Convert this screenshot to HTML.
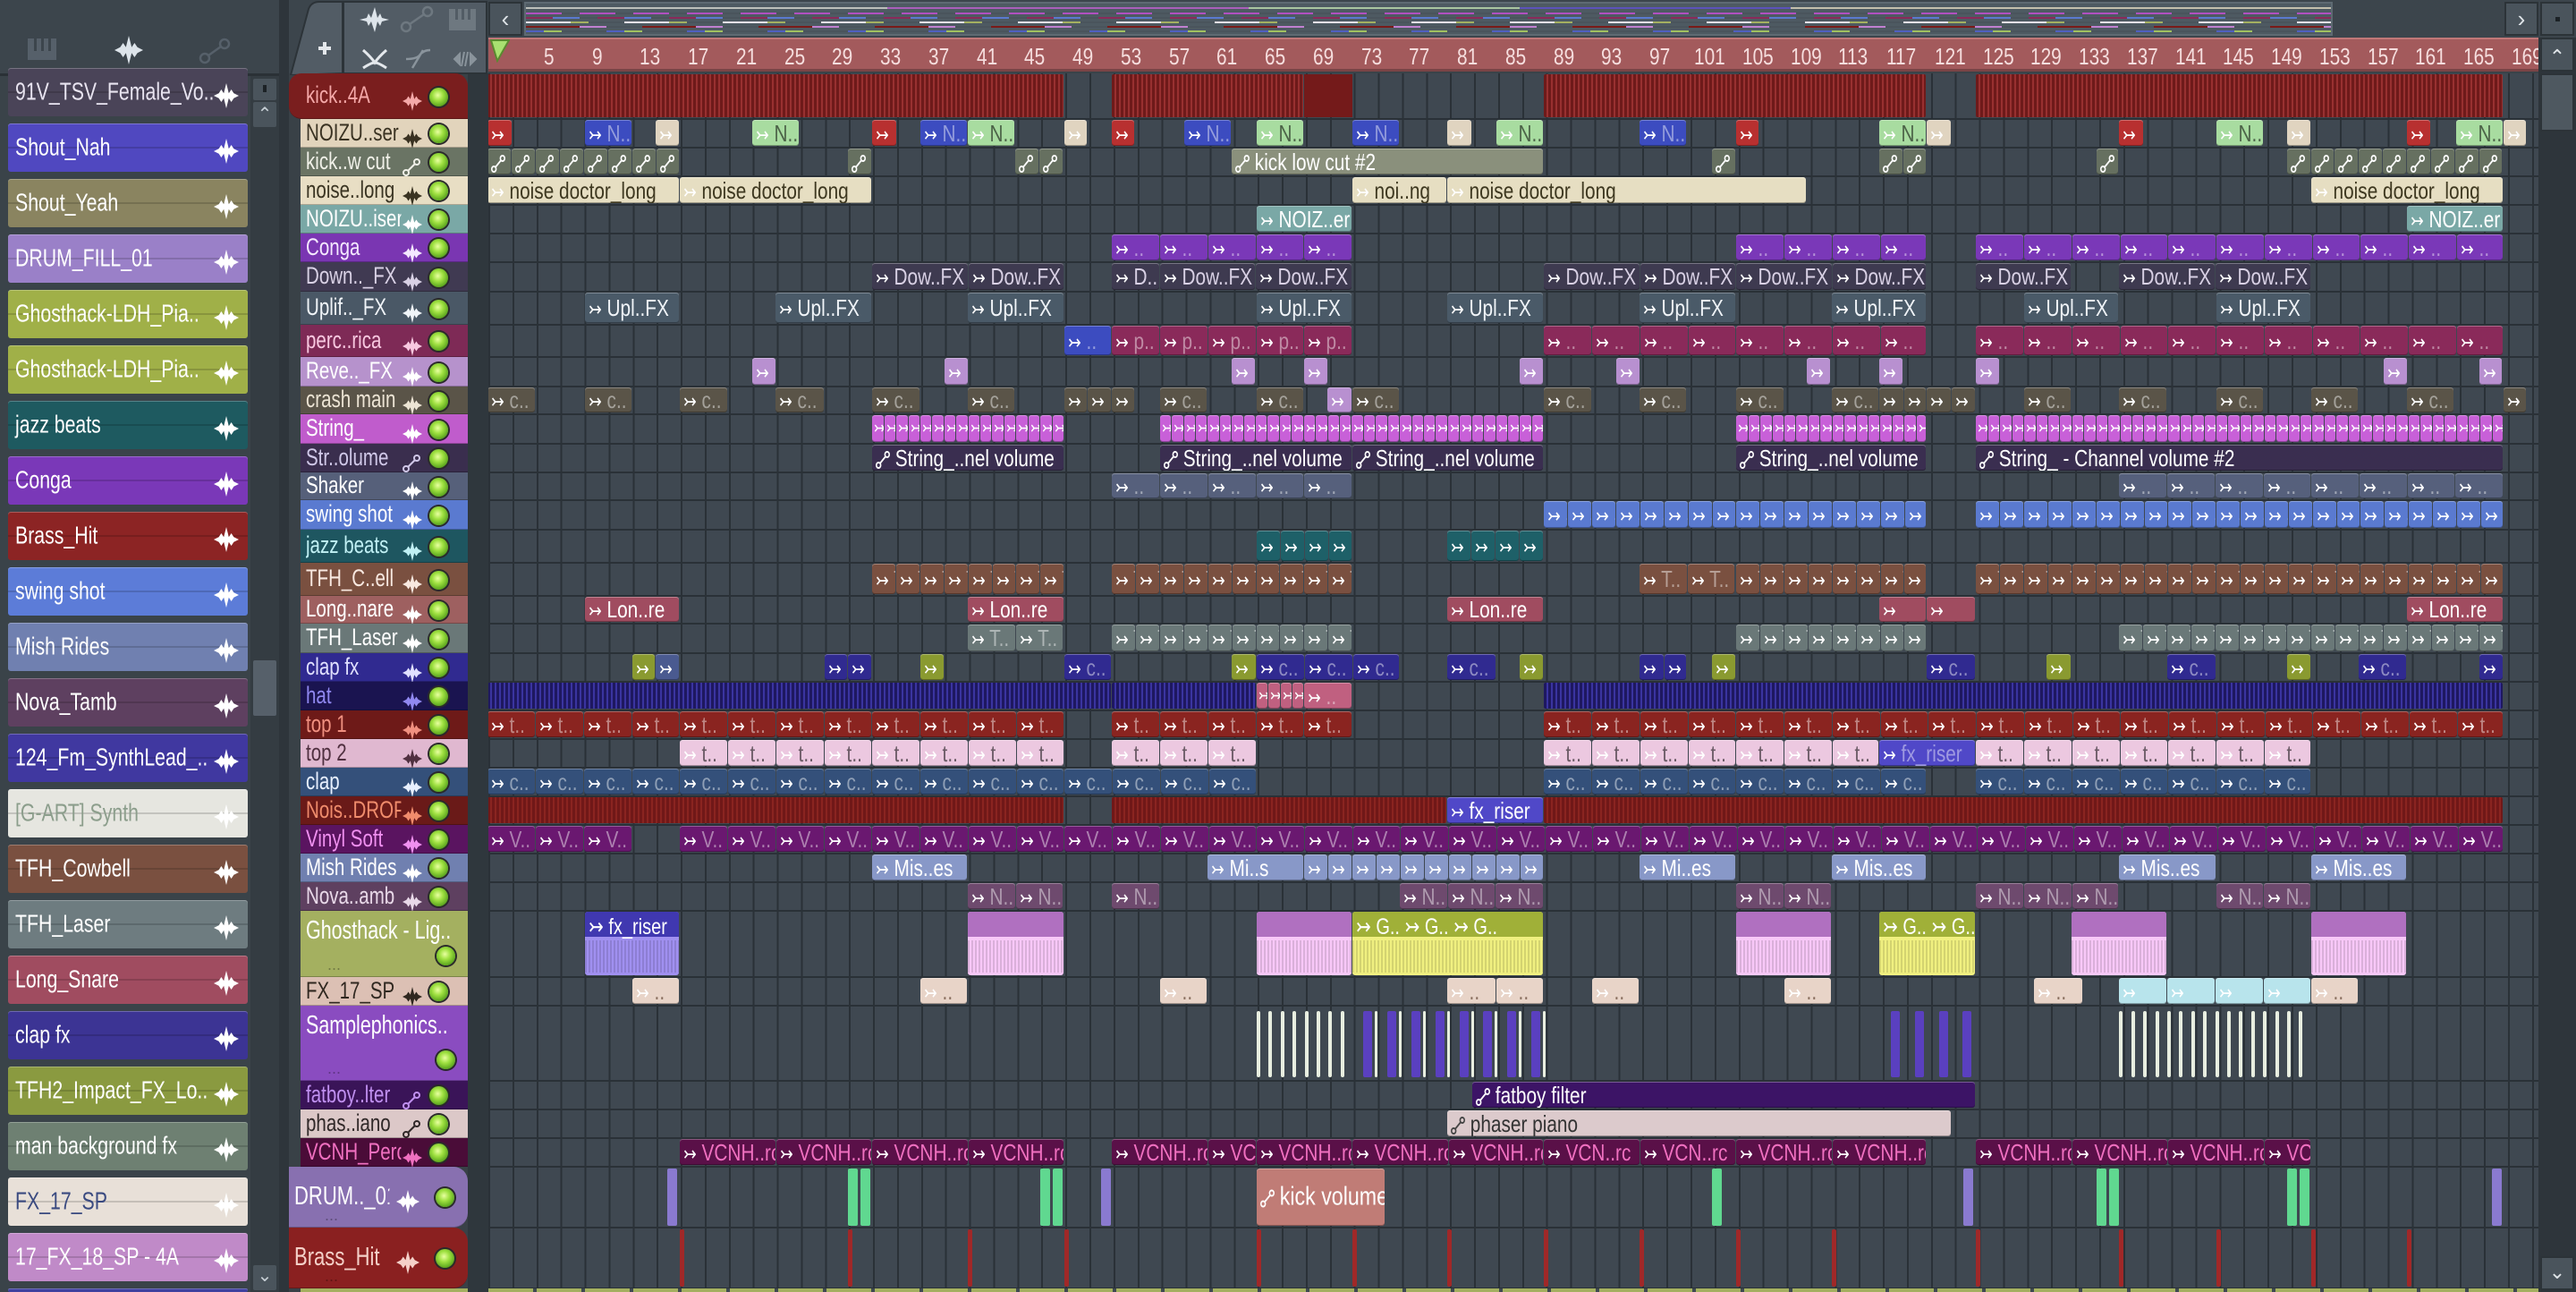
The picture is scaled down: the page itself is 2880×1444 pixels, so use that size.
<!DOCTYPE html>
<html><head><meta charset="utf-8">
<style>
*{box-sizing:border-box;margin:0;padding:0}
html{width:2880px;height:1444px;overflow:hidden}
body{width:2880px;height:1444px;overflow:hidden;background:#3a4349;font-family:"Liberation Sans",sans-serif;position:relative}
.a{position:absolute}
.lbl{white-space:nowrap;overflow:hidden}
.clip{position:absolute;border-radius:3px;overflow:hidden;white-space:nowrap;font-size:26px;line-height:1;box-shadow:inset 0 1px 0 rgba(255,255,255,.3),inset 0 -1px 0 rgba(0,0,0,.3)}
.clip>span{position:absolute;left:4px;top:50%;transform:translateY(-50%) scaleX(.8);transform-origin:left center}
.hdr{position:absolute;left:336px;width:187px;font-size:27px;color:#fff}
.hdr .t{position:absolute;left:6px;top:50%;transform:translateY(-52%) scaleX(.76);transform-origin:left center;white-space:nowrap;overflow:hidden;max-width:140px}
.led{position:absolute;width:21px;height:21px;border-radius:50%;background:radial-gradient(circle at 45% 40%,#e8ffa0 0,#9ee040 35%,#4e9a18 80%);box-shadow:0 0 0 2px #2a2a2a}
.item{position:absolute;left:9px;width:268px;height:54px;border-radius:3px;font-size:28px;color:#fff;box-shadow:inset 0 1px 0 rgba(255,255,255,.25);overflow:hidden}
.item .t{position:absolute;left:8px;top:50%;transform:translateY(-52%) scaleX(.76);transform-origin:left center;white-space:nowrap}
</style></head><body>

<div class="a" style="left:0;top:0;width:316px;height:82px;background:#3c454c"></div>
<div class="a" style="left:0;top:82px;width:316px;height:3px;background:#2a3136"></div>
<svg class="a" style="left:30px;top:42px" width="36" height="28"><rect x="1" y="1" width="32" height="24" fill="#56606a"/><rect x="8" y="1" width="3" height="14" fill="#3c454c"/><rect x="16" y="1" width="3" height="14" fill="#3c454c"/><rect x="24" y="1" width="3" height="14" fill="#3c454c"/></svg>
<svg class="a" style="left:122px;top:40px" width="44" height="32" viewBox="0 0 20 20"><path d="M0 10 L4 8 L6 5 L8 8 L10 0 L12 8 L14 5 L16 8 L20 10 L16 12 L14 15 L12 12 L10 20 L8 12 L6 15 L4 12 Z" fill="#dde4ea"/></svg>
<svg class="a" style="left:222px;top:42px" width="36" height="30"><circle cx="7" cy="23" r="5" fill="none" stroke="#56606a" stroke-width="2.5"/><circle cx="29" cy="7" r="5" fill="none" stroke="#56606a" stroke-width="2.5"/><line x1="11" y1="20" x2="25" y2="10" stroke="#56606a" stroke-width="2.5"/></svg>

<div class="a" style="left:280px;top:85px;width:32px;height:1359px;background:#343c42"></div>
<div class="a" style="left:283px;top:88px;width:26px;height:24px;background:#4a545c;border-radius:2px"></div>
<div class="a" style="left:294px;top:95px;width:4px;height:8px;background:#1c2226"></div>
<div class="a" style="left:283px;top:114px;width:26px;height:28px;background:#4a545c;border-radius:2px;color:#c8d0d6;font-size:20px;text-align:center;line-height:28px">&#8963;</div>
<div class="a" style="left:283px;top:738px;width:26px;height:62px;background:#56606a;border-radius:2px"></div>
<div class="a" style="left:283px;top:1414px;width:26px;height:28px;background:#4a545c;border-radius:2px;color:#c8d0d6;font-size:20px;text-align:center;line-height:24px">&#8964;</div>
<div class="a" style="left:312px;top:0;width:11px;height:1444px;background:#2e353b"></div>

<div class="a" style="left:323px;top:82px;width:200px;height:1362px;background:#394147"></div>
<div class="a" style="left:523px;top:82px;width:23px;height:1362px;background:#2f373d"></div>

<div class="a" style="left:323px;top:0;width:2557px;height:42px;background:#3c454c"></div>
<div class="a" style="left:323px;top:42px;width:223px;height:40px;background:#3c454c"></div>
<svg class="a" style="left:323px;top:0" width="224" height="84"><path d="M2 84 L22 10 Q25 2 34 2 L60 2 L60 82 Z" fill="#525c65" stroke="#2c3338" stroke-width="2"/><rect x="61" y="2" width="160" height="80" fill="#525c65" stroke="#2c3338" stroke-width="2"/>
<path d="M33 54 h14 M40 47 v14" stroke="#e4e8ec" stroke-width="4"/>
<path d="M79 22 L87 20 L89 15 L92 20 L96 8 L99 20 L102 15 L104 20 L112 22 L104 24 L102 29 L99 24 L96 36 L92 24 L89 29 L87 24 Z" fill="#dde4ea"/>
<circle cx="131" cy="30" r="5" fill="none" stroke="#6e7880" stroke-width="2.5"/><circle cx="155" cy="13" r="5" fill="none" stroke="#6e7880" stroke-width="2.5"/><line x1="135" y1="27" x2="151" y2="16" stroke="#6e7880" stroke-width="2.5"/>
<rect x="179" y="10" width="30" height="24" fill="#6e7880"/><rect x="186" y="10" width="3" height="12" fill="#525c65"/><rect x="193" y="10" width="3" height="12" fill="#525c65"/><rect x="200" y="10" width="3" height="12" fill="#525c65"/>
<path d="M83 56 Q92 64 96 70 Q100 64 109 56 M83 76 Q92 70 96 70 Q100 70 109 76" stroke="#e4e8ec" stroke-width="3" fill="none"/>
<path d="M138 76 L150 56 M131 66 Q142 66 146 62 Q150 56 158 56" stroke="#8a949c" stroke-width="2.5" fill="none"/>
<path d="M185 66 l6 -6 v12 z M209 66 l-6 -6 v12 z M196 58 l-3 16 M200 58 l-3 16" stroke="#8a949c" stroke-width="2" fill="#8a949c"/>
</svg>
<div class="a" style="left:546px;top:2px;width:38px;height:38px;background:#4a545c;border:2px solid #2c3338;color:#dfe4e8;font-size:26px;text-align:center;line-height:34px">&#8249;</div>
<div class="a" style="left:586px;top:2px;width:2022px;height:38px;background:#4e5a62;border:2px solid #5e6a72;overflow:hidden">
 <div class="a" style="left:0;top:4px;width:2020px;height:2px;background:linear-gradient(90deg,#d8d8d0 0 20%,#c060d0 20% 40%,#c0e0b0 40% 55%,#6050d0 55% 70%,#e0d8c0 70% 100%);opacity:.8"></div>
 <div class="a" style="left:0;top:10px;width:2020px;height:2px;background:repeating-linear-gradient(90deg,#b050c0 0 40px,#4a545c 40px 60px)"></div>
 <div class="a" style="left:0;top:15px;width:2020px;height:2px;background:repeating-linear-gradient(90deg,#8a2a5a 0 30px,#5a7ad0 30px 60px,#4a545c 60px 80px)"></div>
 <div class="a" style="left:0;top:20px;width:2020px;height:2px;background:repeating-linear-gradient(90deg,#e8e0e8 0 50px,#a4b060 50px 70px,#4a545c 70px 110px)"></div>
 <div class="a" style="left:0;top:25px;width:2020px;height:2px;background:repeating-linear-gradient(90deg,#7a1a18 0 60px,#c080d0 60px 90px,#4a545c 90px 130px)"></div>
 <div class="a" style="left:0;top:30px;width:2020px;height:2px;background:repeating-linear-gradient(90deg,#5060c0 0 20px,#a0c060 20px 40px,#4a545c 40px 90px)"></div>
</div>
<div class="a" style="left:2800px;top:2px;width:38px;height:38px;background:#4a545c;border:2px solid #2c3338;color:#dfe4e8;font-size:26px;text-align:center;line-height:34px">&#8250;</div>
<div class="a" style="left:2840px;top:2px;width:38px;height:38px;background:#4a545c;border:2px solid #2c3338"></div>
<div class="a" style="left:2857px;top:19px;width:5px;height:5px;background:#1c2226"></div>

<div class="a" id="ruler" style="left:546px;top:42px;width:2292px;height:38px;background:#a35a5c;border-top:2px solid #c07878;border-bottom:3px solid #7a4446;color:#f6dede;font-size:26px;overflow:hidden"></div>
<svg class="a" style="left:548px;top:44px" width="22" height="26"><path d="M1 1 L21 1 L8 24 Z" fill="#a8e070" stroke="#5a8a30" stroke-width="2"/></svg>

<div class="a" style="left:2838px;top:42px;width:42px;height:1402px;background:#2e353b"></div>
<div class="a" style="left:2840px;top:42px;width:38px;height:38px;background:#4a545c;border:2px solid #2c3338;color:#dfe4e8;font-size:22px;text-align:center;line-height:40px">&#8963;</div>
<div class="a" style="left:2840px;top:82px;width:38px;height:65px;background:#4e5860;border:2px solid #2c3338"></div>
<div class="a" style="left:2840px;top:1404px;width:38px;height:38px;background:#4a545c;border:2px solid #2c3338;color:#dfe4e8;font-size:22px;text-align:center;line-height:32px">&#8964;</div>

<div class="a" id="grid" style="left:546px;top:82px;width:2292px;height:1362px;background:repeating-linear-gradient(90deg,#2a3137 0 2px,#3f4851 2px 26.88px);overflow:hidden"></div>

<div id="items"></div>
<div id="hdrs"></div>

<script>
const S=1.8367;
const X=d=>Math.round((d-297.3)*S+546);
const WAVE=(c,w)=>`<svg width="${w}" height="${w}" viewBox="0 0 20 20" style="vertical-align:middle"><path d="M0 10 L4 8 L6 5 L8 8 L10 0 L12 8 L14 5 L16 8 L20 10 L16 12 L14 15 L12 12 L10 20 L8 12 L6 15 L4 12 Z" fill="${c}"/></svg>`;
const AUTO=(c,w)=>`<svg width="${w}" height="${w}" viewBox="0 0 20 20" style="vertical-align:middle"><circle cx="4" cy="16" r="3" fill="none" stroke="${c}" stroke-width="2"/><circle cx="16" cy="4" r="3" fill="none" stroke="${c}" stroke-width="2"/><line x1="6" y1="14" x2="14" y2="6" stroke="${c}" stroke-width="2"/></svg>`;

const items=[
["91V_TSV_Female_Vo..","#4a4458","#e8e4f0"],["Shout_Nah","#5048c0","#fff"],["Shout_Yeah","#8a8460","#fff"],["DRUM_FILL_01","#9a80c8","#fff"],
["Ghosthack-LDH_Pia..","#a0b048","#fff"],["Ghosthack-LDH_Pia..","#a0b048","#fff"],["jazz beats","#1e5a60","#fff"],["Conga","#7a38b8","#fff"],
["Brass_Hit","#8c2424","#fff"],["swing shot","#5c7cd8","#fff"],["Mish Rides","#7080b0","#fff"],["Nova_Tamb","#5e4060","#fff"],
["124_Fm_SynthLead_..","#4038a0","#fff"],["[G-ART] Synth","#e6e6e0","#8c9e8c"],["TFH_Cowbell","#7a5040","#fff"],["TFH_Laser","#6e7c80","#fff"],
["Long_Snare","#a04c60","#fff"],["clap fx","#3c3494","#fff"],["TFH2_Impact_FX_Lo..","#8a9a40","#fff"],["man background fx","#6e8072","#fff"],
["FX_17_SP","#e8e0d8","#3a4a80"],["17_FX_18_SP - 4A","#c08ac8","#fff"],["","#4040a0","#fff"]];
let h='';
items.forEach((it,i)=>{const y=76+i*62;const hh=Math.min(54,1444-y);
h+=`<div class="item" style="top:${y}px;height:${hh}px;background:${it[1]}"><div class="a" style="left:0;right:0;top:26px;height:2px;background:rgba(0,0,0,.15)"></div><span class="t" style="color:${it[2]}">${it[0]}</span><span class="a" style="right:10px;top:13px">${WAVE('#fff',28)}</span></div>`;});
document.getElementById('items').innerHTML=h;

const T=[
["kick..4A",82,51,"#7a1e1e","#f4a8a8","w",0,323],
["NOIZU..ser",133,32,"#e2d4bc","#3a3222","w"],
["kick..w cut",165,32,"#6a7464","#f0f0e8","a"],
["noise..long",197,32,"#e8dec4","#3a3422","w"],
["NOIZU..iser",229,32,"#7aa8a6","#fff","w"],
["Conga",261,32,"#7a36b2","#f4e8ff","w"],
["Down.._FX",293,33,"#403a52","#d8d0e4","w"],
["Uplif.._FX",326,37,"#4a5866","#f0f4f8","w"],
["perc..rica",363,36,"#7e2a56","#f8c8e0","w"],
["Reve.._FX",399,33,"#b692cc","#fff","w"],
["crash main",432,31,"#5a5448","#ece4d4","w"],
["String_",463,33,"#c05ccc","#fff","w"],
["Str..olume",496,32,"#3a2e4e","#d0c8e8","a"],
["Shaker",528,31,"#56607a","#fff","w"],
["swing shot",559,33,"#5a7ad0","#fff","w"],
["jazz beats",592,37,"#1e5660","#c0f0f4","w"],
["TFH_C..ell",629,37,"#7a5040","#f8e8e0","w"],
["Long..nare",666,31,"#9e6060","#fff","w"],
["TFH_Laser",697,33,"#6a7878","#fff","w"],
["clap fx",730,32,"#302a90","#e0e0ff","w"],
["hat",762,32,"#1a1450","#9088f0","w"],
["top 1",794,32,"#6e1a18","#f09080","w"],
["top 2",826,32,"#e0b8d0","#503040","w"],
["clap",858,32,"#34507a","#e8f0ff","w"],
["Nois..DROP",890,32,"#6a1a18","#f08c6c","w"],
["Vinyl Soft",922,32,"#5a1460","#f090f0","w"],
["Mish Rides",954,32,"#7080b0","#fff","w"],
["Nova..amb",986,32,"#5e4060","#e8d8e8","w"],
["Ghosthack - Lig..",1018,74,"#a4b060","#fff","",1],
["FX_17_SP",1092,32,"#dcc0b4","#302820","w"],
["Samplephonics..",1124,84,"#8a4cc0","#fff","",1],
["fatboy..lter",1208,32,"#3a1458","#c090f0","a"],
["phas..iano",1240,32,"#dcc8c8","#302828","a"],
["VCNH_Perc",1272,32,"#4a0c38","#f070c0","w"],
["DRUM.._01",1304,68,"#8870b0","#fff","w",2,323],
["Brass_Hit",1372,68,"#8a2020","#f4d0c8","w",2,323],
["",1440,10,"#a4b060","#fff","",3]];
h='';
T.forEach(t=>{const [n,y,hh,bg,fg,ic,tall,x0]=t;const left=x0||336;const w=523-left;
let rad=(n=="kick..4A")?"border-radius:14px 14px 0 14px":(tall==2?"border-radius:0 16px 16px 0":"");
h+=`<div class="hdr" style="left:${left}px;width:${w}px;top:${y}px;height:${hh}px;background:${bg};${rad};border-bottom:1px solid rgba(0,0,0,.25)">`;
if(tall==1){h+=`<span class="a lbl" style="left:6px;top:6px;font-size:29px;color:${fg};transform:scaleX(.74);transform-origin:left top">${n}</span><span class="a" style="left:30px;bottom:2px;font-size:18px;color:rgba(0,0,0,.3)">...</span><div class="led" style="left:${152}px;top:${hh-34}px"></div>`;}
else if(tall==2){h+=`<span class="t" style="color:${fg};font-size:29px">${n}</span><span class="a" style="left:${w-80}px;top:${hh/2-12}px">${WAVE(fg,26)}</span><div class="led" style="left:${w-36}px;top:${hh/2-10}px"></div><span class="a" style="left:40px;bottom:2px;font-size:18px;color:rgba(0,0,0,.3)">...</span>`;}
else if(tall==3){}
else{const off=left==323?13:0;
h+=`<span class="t" style="color:${fg};left:${6+off}px">${n}</span><span class="a" style="left:${114+off}px;top:${hh/2-11}px">${ic=='a'?AUTO(fg,20):WAVE(fg,22)}</span>`;
if(n=="kick..4A")h+=`<span class="a" style="left:${146+off}px;top:${hh/2-8}px;width:0;height:0;border-left:9px solid transparent;border-right:9px solid transparent;border-bottom:14px solid #f09a9a"></span>`;
h+=`<div class="led" style="left:${w-43}px;top:${hh/2-10}px"></div>`;}
h+=`</div>`;});
document.getElementById('hdrs').innerHTML=h;

let r='';
for(let b=1;b<=169;b+=4){const x=(b-1)*13.44;r+=`<span class="a" style="left:${x+(b>=100?4:8)}px;top:4px;transform:scaleX(.8);transform-origin:left">${b==1?'':b}</span>`;}
document.getElementById('ruler').innerHTML=r;

const G=document.getElementById('grid');
let g='';
T.forEach(t=>{g+=`<div class="a" style="left:0;width:2292px;top:${t[1]+t[2]-82-1}px;height:2px;background:#2a3137"></div>`;});
function lum(c){const n=parseInt(c.slice(1),16);return ((n>>16)*0.3+((n>>8)&255)*0.59+(n&255)*0.11);}
function shade(c,f){const n=parseInt(c.slice(1),16);let R=n>>16,Gc=(n>>8)&255,B=n&255;const m=v=>Math.max(0,Math.min(255,Math.round(f>0?v+(255-v)*f:v*(1+f))));return `rgb(${m(R)},${m(Gc)},${m(B)})`;}
function clip(y,hh,a,b,lab,col,opt={}){
 const x=X(a)-546,w=X(b)-X(a)-1;
 const light=lum(col)>150;
 const tc=opt.tc||(light?shade(col,-0.55):shade(col,0.45));
 let inner='';
 if(opt.auto){inner=`<span>${AUTO(light?'#444':'#fff',20)} <span style="color:${light?'#333':'#fff'}">${lab}</span></span>`;}
 else inner=`<span><span style="color:#fff;font-size:22px">&#8611;</span> <span style="color:${tc}">${lab}</span></span>`;
 g+=`<div class="clip" style="left:${x}px;top:${y-82+1}px;width:${w}px;height:${hh-3}px;background:${col}">${w>18?inner:`<span style="left:2px;color:#fff;font-size:19px">&#8611;</span>`}</div>`;
}
function seg(y,hh,a,b,step,lab,col,opt){for(let s=a;s<b-1;s+=step)clip(y,hh,s,Math.min(b,s+step),lab,col,opt);}
const R={};T.forEach(t=>R[t[0]]=[t[1],t[2]]);
function row(n,list,opt){const [y,hh]=R[n];list.forEach(c=>{if(c[4])seg(y,hh,c[0],c[1],c[4],c[2],c[3],opt);else clip(y,hh,c[0],c[1],c[2],c[3],opt);});}
function stripe(n,a,b,base,ln){const [y,hh]=R[n];g+=`<div class="a" style="left:${X(a)-546}px;top:${y-82+1}px;width:${X(b)-X(a)-1}px;height:${hh-3}px;border-radius:2px;background:repeating-linear-gradient(90deg,${base} 0 3px,${ln} 3px 5px)"></div>`;}

stripe("kick..4A",297,648,"#6e1a1a","#983030");stripe("kick..4A",677,794,"#6e1a1a","#983030");
g+=`<div class="a" style="left:${X(794)-546}px;top:1px;width:${X(823)-X(794)}px;height:48px;background:#741a1a"></div>`;
stripe("kick..4A",940,1173,"#6e1a1a","#983030");stripe("kick..4A",1203,1524,"#6e1a1a","#983030");
const Rd="#b83030",Bl="#3c4cc0",Be="#e0d4c0",Gr="#a8dca0";
row("NOIZU..ser",[[297,312,'',Rd],[356,385,'N..',Bl],[399,414,'',Be],[458,487,'N..',Gr],[531,546,'',Rd],[560,589,'N..',Bl],[589,618,'N..',Gr],[648,662,'',Be],[677,691,'',Rd],[721,750,'N..',Bl],[765,794,'N..',Gr],[823,852,'N..',Bl],[881,896,'',Be],[911,940,'N..',Gr],[998,1027,'N..',Bl],[1057,1071,'',Rd],[1144,1173,'N..',Gr],[1173,1188,'',Be],[1290,1305,'',Rd],[1349,1378,'N..',Gr],[1392,1407,'',Be],[1465,1480,'',Rd],[1495,1524,'N..',Gr],[1524,1538,'',Be]]);
const AU={auto:1};
row("kick..w cut",[[297,414,'','#667060',14.63],[516,531,'','#667060'],[618,648,'','#667060',14.63],[750,940,'kick low cut  #2','#8a907c'],[1042,1057,'','#667060'],[1144,1173,'','#667060',14.63],[1276,1290,'','#667060'],[1392,1524,'','#667060',14.63]],AU);
row("noise..long",[[297,414,'noise doctor_long','#e6dec2'],[414,531,'noise doctor_long','#e6dec2'],[823,881,'noi..ng','#e6dec2'],[881,1100,'noise doctor_long','#e6dec2'],[1407,1524,'noise doctor_long','#e6dec2']],{tc:'#3e3820'});
row("NOIZU..iser",[[765,823,'NOIZ..er','#7aa8a6'],[1465,1524,'NOIZ..er','#7aa8a6']],{tc:'#fff'});
row("Conga",[[677,823,'..','#7a38b8',29.26],[1057,1173,'..','#7a38b8',29.26],[1203,1524,'..','#7a38b8',29.26]]);
row("Down.._FX",[[531,648,'Dow..FX','#3e3a50',58.5],[677,706,'D..','#3e3a50'],[706,823,'Dow..FX','#3e3a50',58.5],[940,1173,'Dow..FX','#3e3a50',58.5],[1203,1261,'Dow..FX','#3e3a50'],[1290,1407,'Dow..FX','#3e3a50',58.5]],{tc:'#d8d0e4'});
row("Uplif.._FX",[[356,414,'Upl..FX','#4a5a68'],[472,531,'Upl..FX','#4a5a68'],[589,648,'Upl..FX','#4a5a68'],[765,823,'Upl..FX','#4a5a68'],[881,940,'Upl..FX','#4a5a68'],[998,1057,'Upl..FX','#4a5a68'],[1115,1173,'Upl..FX','#4a5a68'],[1232,1290,'Upl..FX','#4a5a68'],[1349,1407,'Upl..FX','#4a5a68']],{tc:'#f0f4f8'});
row("perc..rica",[[648,677,'..','#3c4cc0'],[677,823,'p..','#8a2a5a',29.26],[940,1173,'..','#8a2a5a',29.26],[1203,1524,'..','#8a2a5a',29.26]]);
row("Reve.._FX",[458,575,750,794,925,984,1100,1144,1203,1451,1509].map(a=>[a,a+14.6,'','#b890d0']));
row("crash main",[[297,326,'c..','#5a5448'],[356,385,'c..','#5a5448'],[414,443,'c..','#5a5448'],[472,502,'c..','#5a5448'],[531,560,'c..','#5a5448'],[589,618,'c..','#5a5448'],[648,662,'','#5a5448'],[662,677,'','#5a5448'],[677,691,'','#5a5448'],[706,735,'c..','#5a5448'],[765,794,'c..','#5a5448'],[808,823,'','#b890d0'],[823,852,'c..','#5a5448'],[940,969,'c..','#5a5448'],[998,1027,'c..','#5a5448'],[1057,1086,'c..','#5a5448'],[1115,1144,'c..','#5a5448'],[1144,1159,'','#5a5448'],[1159,1173,'','#5a5448'],[1173,1188,'','#5a5448'],[1188,1203,'','#5a5448'],[1232,1261,'c..','#5a5448'],[1290,1319,'c..','#5a5448'],[1349,1378,'c..','#5a5448'],[1407,1436,'c..','#5a5448'],[1465,1494,'c..','#5a5448'],[1524,1538,'','#5a5448']]);
row("String_",[[531,648,'','#c860d8',7.31],[706,940,'','#c860d8',7.31],[1057,1173,'','#c860d8',7.31],[1203,1524,'','#c860d8',7.31]]);
row("Str..olume",[[531,648,'String_..nel volume','#3a2e50'],[706,823,'String_..nel volume','#3a2e50'],[823,940,'String_..nel volume','#3a2e50'],[1057,1173,'String_..nel volume','#3a2e50'],[1203,1524,'String_  - Channel volume #2','#3a2e50']],AU);
row("Shaker",[[677,823,'..','#56607c',29.26],[1290,1524,'..','#56607c',29.26]]);
row("swing shot",[[940,1173,'S..','#5a7ad0',14.63],[1203,1524,'S..','#5a7ad0',14.63]]);
row("jazz beats",[[765,823,'','#1e6068',14.63],[881,940,'','#1e6068',14.63]]);
row("TFH_C..ell",[[531,648,'T..','#7a5040',14.63],[677,823,'T..','#7a5040',14.63],[998,1057,'T..','#7a5040',29.26],[1057,1173,'T..','#7a5040',14.63],[1203,1524,'T..','#7a5040',14.63]]);
row("Long..nare",[[356,414,'Lon..re','#a04c60'],[589,648,'Lon..re','#a04c60'],[881,940,'Lon..re','#a04c60'],[1144,1173,'','#a04c60'],[1173,1203,'','#a04c60'],[1465,1524,'Lon..re','#a04c60']],{tc:'#fff'});
row("TFH_Laser",[[589,648,'T..','#6a7878',29.26],[677,823,'T..','#6a7878',14.63],[1057,1173,'T..','#6a7878',14.63],[1290,1524,'T..','#6a7878',14.63]]);
const Ol="#8a9a30",Cf="#302a90";
row("clap fx",[[385,399,'',Ol],[399,414,'','#4a5a90'],[502,516,'',Cf],[516,531,'',Cf],[560,575,'',Ol],[648,677,'c..',Cf],[750,765,'',Ol],[765,852,'c..',Cf,29.26],[881,911,'c..',Cf],[925,940,'',Ol],[998,1013,'',Cf],[1013,1027,'',Cf],[1042,1057,'',Ol],[1173,1203,'c..',Cf],[1246,1261,'',Ol],[1319,1349,'c..',Cf],[1392,1407,'',Ol],[1436,1465,'c..',Cf],[1509,1524,'',Cf]]);
stripe("hat",297,677,"#1e1860","#3a34a0");stripe("hat",677,765,"#1e1860","#3a34a0");
row("hat",[[765,794,'','#c06080',7.3],[794,823,'..','#c06080']]);
stripe("hat",940,1524,"#1e1860","#3a34a0");
row("top 1",[[297,648,'t..','#8a2420',29.26],[677,823,'t..','#8a2420',29.26],[940,1524,'t..','#8a2420',29.26]]);
row("top 2",[[414,648,'t..','#ecc8e0',29.26],[677,765,'t..','#ecc8e0',29.26],[940,1144,'t..','#ecc8e0',29.26],[1144,1203,'fx_riser','#5048c8'],[1203,1407,'t..','#ecc8e0',29.26]]);
row("clap",[[297,765,'c..','#34507a',29.26],[940,1173,'c..','#34507a',29.26],[1203,1407,'c..','#34507a',29.26]]);
stripe("Nois..DROP",297,648,"#701818","#8a2420");stripe("Nois..DROP",677,881,"#701818","#8a2420");
row("Nois..DROP",[[881,940,'fx_riser','#5048c8']],{tc:'#fff'});
stripe("Nois..DROP",940,1524,"#701818","#8a2420");
row("Vinyl Soft",[[297,385,'V..','#6a1870',29.26],[414,1524,'V..','#6a1870',29.26]]);
row("Mish Rides",[[531,589,'Mis..es','#8898c8'],[735,794,'Mi..s','#8898c8'],[794,940,'','#8898c8',14.63],[998,1057,'Mi..es','#8898c8'],[1115,1173,'Mis..es','#8898c8'],[1290,1349,'Mis..es','#8898c8'],[1407,1465,'Mis..es','#8898c8']],{tc:'#fff'});
row("Nova..amb",[[589,648,'N..','#6e4a6e',29.26],[677,706,'N..','#6e4a6e'],[852,940,'N..','#6e4a6e',29.26],[1057,1115,'N..','#6e4a6e',29.26],[1203,1290,'N..','#6e4a6e',29.26],[1349,1407,'N..','#6e4a6e',29.26]]);
function ghost(a,b,top,body,lab){const y=1018-82+1,x=X(a)-546,w=X(b)-X(a)-1;
g+=`<div class="a" style="left:${x}px;top:${y}px;width:${w}px;height:71px;border-radius:3px;overflow:hidden;background:${body}"><div class="a" style="left:0;top:0;width:100%;height:28px;background:${top};color:#fff;font-size:25px;padding:2px 4px;white-space:nowrap"><span style="display:inline-block;transform:scaleX(.8);transform-origin:left">${lab}</span></div><div class="a" style="left:0;top:32px;width:100%;height:36px;background:repeating-linear-gradient(90deg,rgba(0,0,0,.12) 0 2px,transparent 2px 4px)"></div></div>`;}
ghost(356,414,'#4038b0','#a090f0','&#8611; fx_riser');
[[589,648],[765,823],[1057,1115],[1261,1319],[1407,1465]].forEach(p=>ghost(p[0],p[1],'#b070c0','#f8c8f8',''));
[[823,940],[1144,1203]].forEach(p=>ghost(p[0],p[1],'#a0b038','#f0f080','&#8611; G..  &#8611; G..  &#8611; G..'));
row("FX_17_SP",[[385,414,'..','#e8d4c8'],[560,589,'..','#e8d4c8'],[706,735,'..','#e8d4c8'],[881,911,'..','#e8d4c8'],[911,940,'..','#e8d4c8'],[969,998,'..','#e8d4c8'],[1086,1115,'..','#e8d4c8'],[1238,1268,'..','#e8d4c8'],[1290,1407,'','#b8e4ec',29.26],[1407,1436,'..','#e8d4c8']],{tc:'#8a7060'});
function stick(a,col,w){g+=`<div class="a" style="left:${X(a)-546}px;top:${1124-82+6}px;width:${w}px;height:74px;background:${col};border-radius:2px"></div>`;}
for(let a=765;a<823;a+=7.3)stick(a,'#e8eee0',4);
for(let a=830;a<940;a+=14.6){stick(a,'#5a40c0',10);stick(a+7,'#e8eee0',3);}
for(let a=1151;a<1203;a+=14.6)stick(a,'#5a40c0',10);
for(let a=1290;a<1400;a+=7.3)stick(a,'#e8eee0',4);
row("fatboy..lter",[[896,1203,'fatboy filter','#3c1466']],{auto:1});
row("phas..iano",[[881,1188,'phaser piano','#dccacc']],{auto:1});
row("VCNH_Perc",[[414,648,'VCNH..rc','#5a1048',58.5],[677,765,'VCNH..rc','#5a1048',58.5],[765,940,'VCNH..rc','#5a1048',58.5],[940,1057,'VCN..rc','#5a1048',58.5],[1057,1173,'VCNH..rc','#5a1048',58.5],[1203,1407,'VCNH..rc','#5a1048',58.5]],{tc:'#f070c0'});
function thin(rowY,hh,a,w,col){g+=`<div class="a" style="left:${X(a)-546}px;top:${rowY-82+2}px;width:${w}px;height:${hh-4}px;background:${col};border-radius:2px"></div>`;}
[406,670,1195,1517].forEach(a=>thin(1304,68,a,11,'#8a7ad0'));
[516,524,633,641,1042,1276,1284,1392,1400].forEach(a=>thin(1304,68,a,11,'#60d890'));
g+=`<div class="clip" style="left:${X(765)-546}px;top:${1304-82+2}px;width:${X(843)-X(765)}px;height:64px;background:#c07c76"><span>${AUTO('#fff',20)} <span style="color:#fff;font-size:29px">kick volume</span></span></div>`;
[414,516,589,648,765,823,881,940,998,1057,1115,1203,1290,1349,1407,1465].forEach(a=>thin(1372,68,a,5,'#a02828'));
G.innerHTML=g;
</script>
<div class="a" style="left:546px;top:1440px;width:2292px;height:4px;background:repeating-linear-gradient(90deg,#a4b060 0 50px,#3f4851 50px 54px)"></div>
</body></html>
